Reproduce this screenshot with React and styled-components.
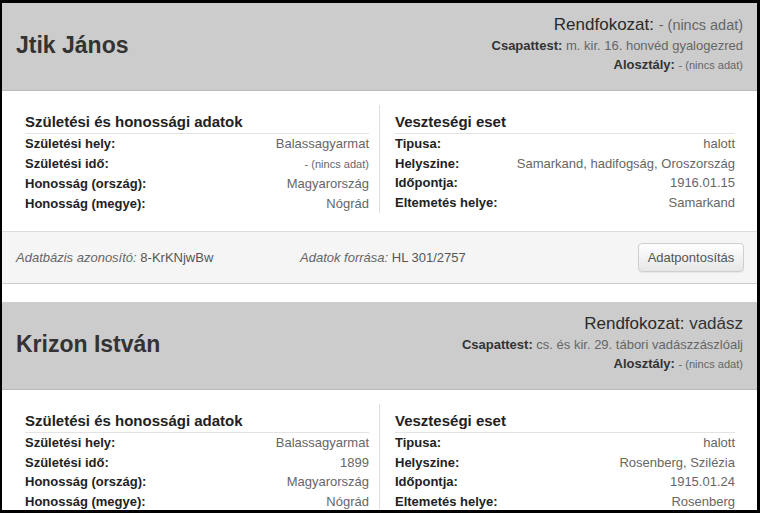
import React from "react";
import styled, { createGlobalStyle } from "styled-components";

const GlobalStyle = createGlobalStyle`
  html, body {
    margin: 0;
    padding: 0;
    background: #000;
  }
  body {
    font-family: "Liberation Sans", Arial, sans-serif;
    color: #333;
  }
`;

const Frame = styled.div`
  box-sizing: border-box;
  width: 760px;
  height: 513px;
  overflow: hidden;
  border-style: solid;
  border-color: #000;
  border-width: 3px 3px 3px 2px;
  background: #fff;
`;

const Card = styled.section`
  margin-bottom: 18px;
`;

const Header = styled.header`
  display: flex;
  justify-content: space-between;
  height: 87px;
  padding: 0 14px;
  background: #cccccc;
  border-bottom: 1px solid #b9b9b9;
`;

const Name = styled.h2`
  margin: 0 0 3px;
  align-self: center;
  font-size: 23px;
  line-height: 26px;
  font-weight: bold;
  color: #333;
`;

const Meta = styled.div`
  padding-top: 11px;
  text-align: right;
  color: #555;
`;

const MetaLine = styled.div`
  font-size: ${p => (p.$big ? "17px" : "13px")};
  line-height: ${p => (p.$big ? "22px" : "19px")};
  color: ${p => (p.$big ? "#333" : "#666")};
`;

const MetaLabel = styled.span`
  font-weight: bold;
  font-weight: ${p => (p.$big ? "normal" : "bold")};
  color: ${p => (p.$big ? "#2a2a2a" : "#333")};
`;

const Small = styled.span`
  font-size: 85%;
  color: #666;
`;

const Body = styled.div`
  display: grid;
  grid-template-columns: 1fr 1fr;
  padding: 14px 22px 18px 23px;
`;

const Column = styled.div`
  padding: ${p => (p.$right ? "0 0 0 15px" : "0 10px 0 0")};
  border-right: ${p => (p.$right ? "none" : "1px solid #dedede")};
`;

const SectionTitle = styled.h4`
  margin: 7px 0 0;
  padding-bottom: 1px;
  font-size: 15px;
  line-height: 20px;
  font-weight: bold;
  color: #222;
  border-bottom: 1px solid #e3e3e3;
`;

const Row = styled.div`
  display: flex;
  justify-content: space-between;
  font-size: 13px;
  line-height: 19.5px;
`;

const Label = styled.span`
  font-weight: bold;
  color: #222;
`;

const Value = styled.span`
  color: #666;
`;

const Footer = styled.footer`
  display: grid;
  grid-template-columns: 284px 1fr auto;
  align-items: center;
  height: 51px;
  padding: 0 13px 0 14px;
  background: #f5f5f5;
  border-top: 1px solid #dcdcdc;
  border-bottom: 1px solid #cdcdcd;
  font-size: 13px;
  color: #555;
`;

const FooterItem = styled.div`
  white-space: nowrap;
  em {
    color: #666;
  }
`;

const FixButton = styled.button`
  height: 29px;
  width: 106px;
  padding: 0;
  font-family: inherit;
  font-size: 13px;
  color: #555;
  background: linear-gradient(#ffffff, #e6e6e6);
  border: 1px solid #cfcfcf;
  border-radius: 4px;
  box-shadow: 0 1px 1px rgba(0, 0, 0, 0.06);
  cursor: pointer;
`;

const NA = () => <Small>- (nincs adat)</Small>;

const soldiers = [
  {
    name: "Jtik János",
    rank: null,
    unit: "m. kir. 16. honvéd gyalogezred",
    sub: null,
    birth: [
      ["Születési hely:", "Balassagyarmat"],
      ["Születési idő:", null],
      ["Honosság (ország):", "Magyarország"],
      ["Honosság (megye):", "Nógrád"],
    ],
    loss: [
      ["Tipusa:", "halott"],
      ["Helyszine:", "Samarkand, hadifogság, Oroszország"],
      ["Időpontja:", "1916.01.15"],
      ["Eltemetés helye:", "Samarkand"],
    ],
    id: "8-KrKNjwBw",
    source: "HL 301/2757",
  },
  {
    name: "Krizon István",
    rank: "vadász",
    unit: "cs. és kir. 29. tábori vadászzászlóalj",
    sub: null,
    birth: [
      ["Születési hely:", "Balassagyarmat"],
      ["Születési idő:", "1899"],
      ["Honosság (ország):", "Magyarország"],
      ["Honosság (megye):", "Nógrád"],
    ],
    loss: [
      ["Tipusa:", "halott"],
      ["Helyszine:", "Rosenberg, Szilézia"],
      ["Időpontja:", "1915.01.24"],
      ["Eltemetés helye:", "Rosenberg"],
    ],
    id: "9-LpQxRtCz",
    source: "HL 301/2758",
  },
];

const Section = ({ title, rows, right }) => (
  <Column $right={right}>
    <SectionTitle>{title}</SectionTitle>
    {rows.map(([label, value]) => (
      <Row key={label}>
        <Label>{label}</Label>
        <Value>{value ? value : <NA />}</Value>
      </Row>
    ))}
  </Column>
);

const SoldierCard = ({ s }) => (
  <Card>
    <Header>
      <Name>{s.name}</Name>
      <Meta>
        <MetaLine $big>
          <MetaLabel $big>Rendfokozat:</MetaLabel> {s.rank ? s.rank : <NA />}
        </MetaLine>
        <MetaLine>
          <MetaLabel>Csapattest:</MetaLabel> {s.unit ? s.unit : <NA />}
        </MetaLine>
        <MetaLine>
          <MetaLabel>Alosztály:</MetaLabel> {s.sub ? s.sub : <NA />}
        </MetaLine>
      </Meta>
    </Header>
    <Body>
      <Section title="Születési és honossági adatok" rows={s.birth} />
      <Section title="Veszteségi eset" rows={s.loss} right />
    </Body>
    <Footer>
      <FooterItem>
        <em>Adatbázis azonosító:</em> {s.id}
      </FooterItem>
      <FooterItem>
        <em>Adatok forrása:</em> {s.source}
      </FooterItem>
      <FixButton>Adatpontosítás</FixButton>
    </Footer>
  </Card>
);

export default function App() {
  return (
    <>
      <GlobalStyle />
      <Frame>
        {soldiers.map(s => (
          <SoldierCard key={s.id} s={s} />
        ))}
      </Frame>
    </>
  );
}
